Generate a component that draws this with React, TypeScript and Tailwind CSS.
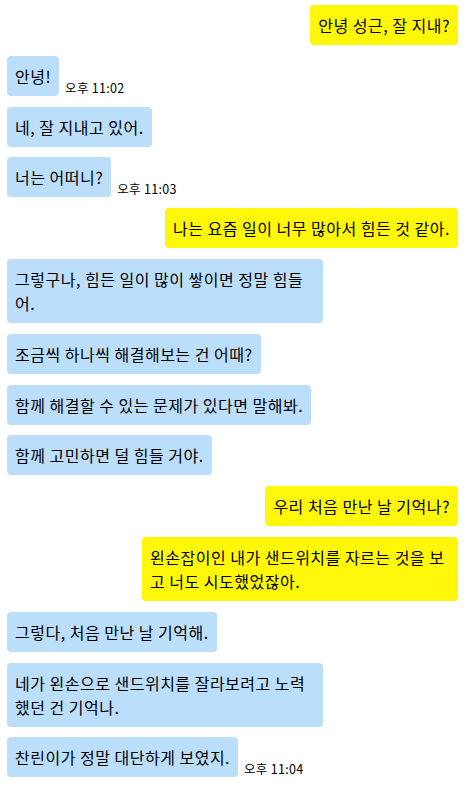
const messages = [
  { me: true, text: "안녕 성근, 잘 지내?" },
  { me: false, text: "안녕!", time: "오후 11:02" },
  { me: false, text: "네, 잘 지내고 있어." },
  { me: false, text: "너는 어떠니?", time: "오후 11:03" },
  { me: true, text: "나는 요즘 일이 너무 많아서 힘든 것 같아." },
  { me: false, text: "그렇구나, 힘든 일이 많이 쌓이면 정말 힘들어." },
  { me: false, text: "조금씩 하나씩 해결해보는 건 어때?" },
  { me: false, text: "함께 해결할 수 있는 문제가 있다면 말해봐." },
  { me: false, text: "함께 고민하면 덜 힘들 거야." },
  { me: true, text: "우리 처음 만난 날 기억나?" },
  { me: true, text: "왼손잡이인 내가 샌드위치를 자르는 것을 보고 너도 시도했었잖아." },
  { me: false, text: "그렇다, 처음 만난 날 기억해." },
  { me: false, text: "네가 왼손으로 샌드위치를 잘라보려고 노력했던 건 기억나." },
  { me: false, text: "찬린이가 정말 대단하게 보였지.", time: "오후 11:04" },
];

export default function App() {
  return (
    <main className="bg-white min-h-screen text-black font-['Noto_Sans_CJK_KR','Noto_Sans',sans-serif]">
      <div className="flex flex-col gap-[10.8px] pl-[7px] pr-[6px] pt-[5px] pb-2">
        {messages.map((m, i) => (
          <div key={i} className={`flex items-end ${m.me ? "justify-end" : "justify-start"}`}>
            <div
              className={`max-w-[316px] rounded px-2 py-2 text-[16px] leading-6 tracking-[0.5px] ${
                m.me ? "bg-[#fff70a]" : "bg-[#bbdefb]"
              }`}
            >
              {m.text}
            </div>
            {m.time && (
              <span className="ml-[6px] text-[12.5px] leading-4 tracking-[0.3px] whitespace-nowrap">
                {m.time}
              </span>
            )}
          </div>
        ))}
      </div>
    </main>
  );
}
